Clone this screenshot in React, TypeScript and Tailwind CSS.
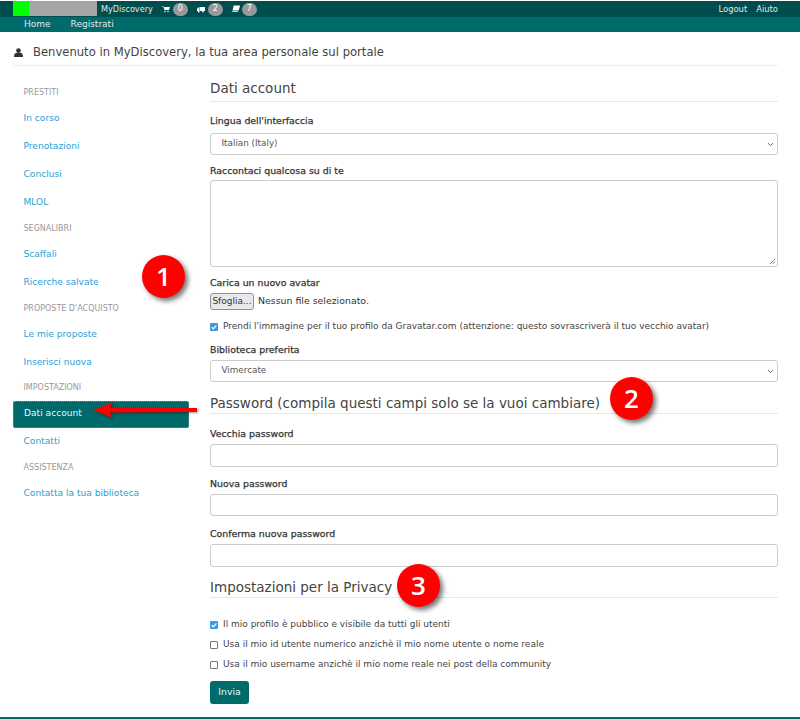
import { ChevronDown } from 'lucide-react';

const font = { fontFamily: '"DejaVu Sans", sans-serif' };

type NavEntry = { label: string; kind: 'head' | 'link' | 'active' };

const nav: NavEntry[] = [
  { label: 'PRESTITI', kind: 'head' },
  { label: 'In corso', kind: 'link' },
  { label: 'Prenotazioni', kind: 'link' },
  { label: 'Conclusi', kind: 'link' },
  { label: 'MLOL', kind: 'link' },
  { label: 'SEGNALIBRI', kind: 'head' },
  { label: 'Scaffali', kind: 'link' },
  { label: 'Ricerche salvate', kind: 'link' },
  { label: "PROPOSTE D'ACQUISTO", kind: 'head' },
  { label: 'Le mie proposte', kind: 'link' },
  { label: 'Inserisci nuova', kind: 'link' },
  { label: 'IMPOSTAZIONI', kind: 'head' },
  { label: 'Dati account', kind: 'active' },
  { label: 'Contatti', kind: 'link' },
  { label: 'ASSISTENZA', kind: 'head' },
  { label: 'Contatta la tua biblioteca', kind: 'link' },
];

function NavItem({ entry }: { entry: NavEntry }) {
  if (entry.kind === 'head') {
    return <div className="h-[23.4px] flex items-center pl-[10.500px] text-[8px] text-[#999]">{entry.label}</div>;
  }
  if (entry.kind === 'active') {
    return (
      <div className="h-[27px] my-[0.5px] flex items-center pl-[10px] text-[9.1px] text-[#dff] bg-[#006a6a] rounded-[2px] border border-dotted border-[#5a9a9a]">
        {entry.label}
      </div>
    );
  }
  return <div className="h-[28.2px] flex items-center pl-[10.500px] text-[9.1px] text-[#2a9fd6]">{entry.label}</div>;
}

function Badge({ n }: { n: number }) {
  return <span className="w-[15px] h-[13px] rounded-full bg-[#999] text-white text-[8px] flex items-center justify-center">{n}</span>;
}

function Heading({ children, className }: { children: string; className: string }) {
  return (
    <div className={`text-[#444] text-[13.5px] border-b border-[#e8e8e8] ${className}`}>{children}</div>
  );
}

function Label({ children, className }: { children: string; className: string }) {
  return <div className={`text-[9.4px] text-[#333] leading-[12px] [-webkit-text-stroke:0.25px_#333] ${className}`}>{children}</div>;
}

function Select({ value, className }: { value: string; className: string }) {
  return (
    <div className={`h-[22px] border border-[#ccc] rounded-[3px] flex items-center justify-between pl-[10.500px] pr-[2px] text-[8.8px] text-[#555] ${className}`}>
      {value}
      <ChevronDown size={9} strokeWidth={2.5} className="text-[#555]" />
    </div>
  );
}

function Input({ className }: { className: string }) {
  return <div className={`h-[22.5px] border border-[#ccc] rounded-[3px] ${className}`} />;
}

function Check({ checked, label, className }: { checked?: boolean; label: string; className: string }) {
  return (
    <div className={`flex items-center gap-[5px] h-[12px] text-[9px] text-[#444] ${className}`}>
      {checked ? (
        <span className="w-[8px] h-[8px] rounded-[1px] bg-[#3b99e0] flex items-center justify-center">
          <svg viewBox="0 0 10 10" className="w-[8px] h-[8px]">
            <path d="M2 5.2 L4.2 7.4 L8 3" fill="none" stroke="white" strokeWidth="1.6" />
          </svg>
        </span>
      ) : (
        <span className="w-[8px] h-[8px] rounded-[1px] border border-[#777] bg-white" />
      )}
      {label}
    </div>
  );
}

function Marker({ n, className }: { n: number; className: string }) {
  return (
    <div className={`absolute w-[43px] h-[43px] rounded-full bg-[#f00] text-white flex items-center justify-center text-[26px] font-semibold font-['Open_Sans'] shadow-[3px_3px_5px_rgba(0,0,0,0.55)] ${className}`}>
      {n}
    </div>
  );
}

export default function App() {
  return (
    <div className="relative w-[800px] h-[719px] overflow-hidden bg-white" style={font}>
      {/* top bars */}
      <div className="mt-[1px] h-[16px] bg-[#004d4d] flex items-center text-white text-[8.1px] pr-[22px]">
        <div className="w-[16px] h-[15px] ml-[13px] self-start bg-[#00ff00]" />
        <div className="w-[68px] h-[15px] self-start bg-[#a5a5a5]" />
        <span className="ml-[4px] text-[#e6e6e6]">MyDiscovery</span>
        <svg viewBox="0 0 16 14" className="w-[8px] h-[8px] ml-[9px] mr-[3px]" fill="white">
          <path d="M0 1h3l.6 2H16l-2 6H5L3 3 2 2H0z" />
          <circle cx="6" cy="12" r="1.6" />
          <circle cx="12" cy="12" r="1.6" />
        </svg>
        <Badge n={0} />
        <svg viewBox="0 0 16 12" className="w-[8px] h-[7px] ml-[9px] mr-[3px]" fill="white">
          <path d="M5 1h11v8H5zM0 5l2-3h2v7H0z" />
          <circle cx="3.5" cy="10" r="1.8" />
          <circle cx="12" cy="10" r="1.8" />
        </svg>
        <Badge n={2} />
        <svg viewBox="0 0 14 12" className="w-[8px] h-[8px] ml-[9px] mr-[2px]" fill="white">
          <path d="M3 0h11l-2 8H1zM1 9h10l-.4 2H0z" />
        </svg>
        <Badge n={7} />
        <span className="ml-auto text-[8.4px] text-[#e6e6e6]">Logout</span>
        <span className="ml-[9px] text-[8.4px] text-[#e6e6e6]">Aiuto</span>
      </div>
      <div className="h-[15px] bg-[#006b6b] flex items-center gap-[20px] pl-[24px] text-[9px] text-[#e6e6e6]">
        <span>Home</span>
        <span>Registrati</span>
      </div>

      <div className="ml-[13px] w-[765px]">
        {/* page title */}
        <div className="mt-[11px] h-[19px] flex items-center gap-[10px] text-[11.6px] text-[#444] border-b border-[#eee] box-content pb-[3px]">
          <svg viewBox="0 0 14 14" className="w-[9px] h-[9px] ml-[1px]" fill="#333">
            <circle cx="7" cy="4" r="3.6" />
            <path d="M0 14c0-5 2-6.500 4-6.500h6c2 0 4 1.500 4 6.500z" />
          </svg>
          Benvenuto in MyDiscovery, la tua area personale sul portale
        </div>

        <div className="flex mt-[13px]">
          {/* sidebar */}
          <div className="w-[176px] shrink-0 pt-[2px]">
            {nav.map(entry => (
              <NavItem key={entry.label} entry={entry} />
            ))}
          </div>

          {/* form */}
          <div className="ml-[21px] flex-1">
            <Heading className="h-[23px] leading-[18px]">Dati account</Heading>
            <Label className="mt-[13px]">Lingua dell'interfaccia</Label>
            <Select value="Italian (Italy)" className="mt-[6px]" />
            <Label className="mt-[10px]">Raccontaci qualcosa su di te</Label>
            <div className="relative mt-[3px] h-[87px] border border-[#ccc] rounded-[3px]">
              <svg viewBox="0 0 8 8" className="absolute right-[1px] bottom-[1px] w-[7px] h-[7px]">
                <path d="M1 7 L7 1 M4 7 L7 4" stroke="#777" strokeWidth="1" />
              </svg>
            </div>
            <Label className="mt-[10px]">Carica un nuovo avatar</Label>
            <div className="mt-[4px] flex items-center gap-[4px] text-[9.4px] text-[#333]">
              <span className="h-[17px] w-[44px] flex items-center justify-center bg-[#e9e9ed] border border-[#8f8f9d] rounded-[3px] text-[9px]">Sfoglia...</span>
              Nessun file selezionato.
            </div>
            <Check checked className="mt-[11px]" label="Prendi l'immagine per il tuo profilo da Gravatar.com (attenzione: questo sovrascriverà il tuo vecchio avatar)" />
            <Label className="mt-[11px]">Biblioteca preferita</Label>
            <Select value="Vimercate" className="mt-[4px]" />
            <Heading className="mt-[12px] h-[20px] leading-[18px]">Password (compila questi campi solo se la vuoi cambiare)</Heading>
            <Label className="mt-[14px]">Vecchia password</Label>
            <Input className="mt-[4px]" />
            <Label className="mt-[11px]">Nuova password</Label>
            <Input className="mt-[4px]" />
            <Label className="mt-[12px]">Conferma nuova password</Label>
            <Input className="mt-[4px]" />
            <Heading className="mt-[11px] h-[20px] leading-[18px]">Impostazioni per la Privacy</Heading>
            <Check checked className="mt-[21px]" label="Il mio profilo è pubblico e visibile da tutti gli utenti" />
            <Check className="mt-[8px]" label="Usa il mio id utente numerico anzichè il mio nome utente o nome reale" />
            <Check className="mt-[8px]" label="Usa il mio username anzichè il mio nome reale nei post della community" />
            <div className="mt-[10px] w-[39px] h-[23px] bg-[#006b6b] rounded-[3px] flex items-center justify-center text-[9.4px] text-[#dff]">Invia</div>
          </div>
        </div>
      </div>

      {/* footer line */}
      <div className="absolute left-0 right-0 bottom-0 h-[2px] bg-[#006b6b]" />

      {/* annotations on the screenshot */}
      <Marker n={1} className="left-[142px] top-[255px]" />
      <Marker n={2} className="left-[610px] top-[377px]" />
      <Marker n={3} className="left-[397px] top-[564px]" />
      <svg viewBox="0 0 110 20" className="absolute left-[92px] top-[400px] w-[110px] h-[20px] drop-shadow-[1px_1px_1px_rgba(0,0,0,0.4)]">
        <path d="M1 10 L21 2 L18 7.500 L105 8 L105 12 L18 12.500 L21 18 Z" fill="#f00" />
      </svg>
    </div>
  );
}
